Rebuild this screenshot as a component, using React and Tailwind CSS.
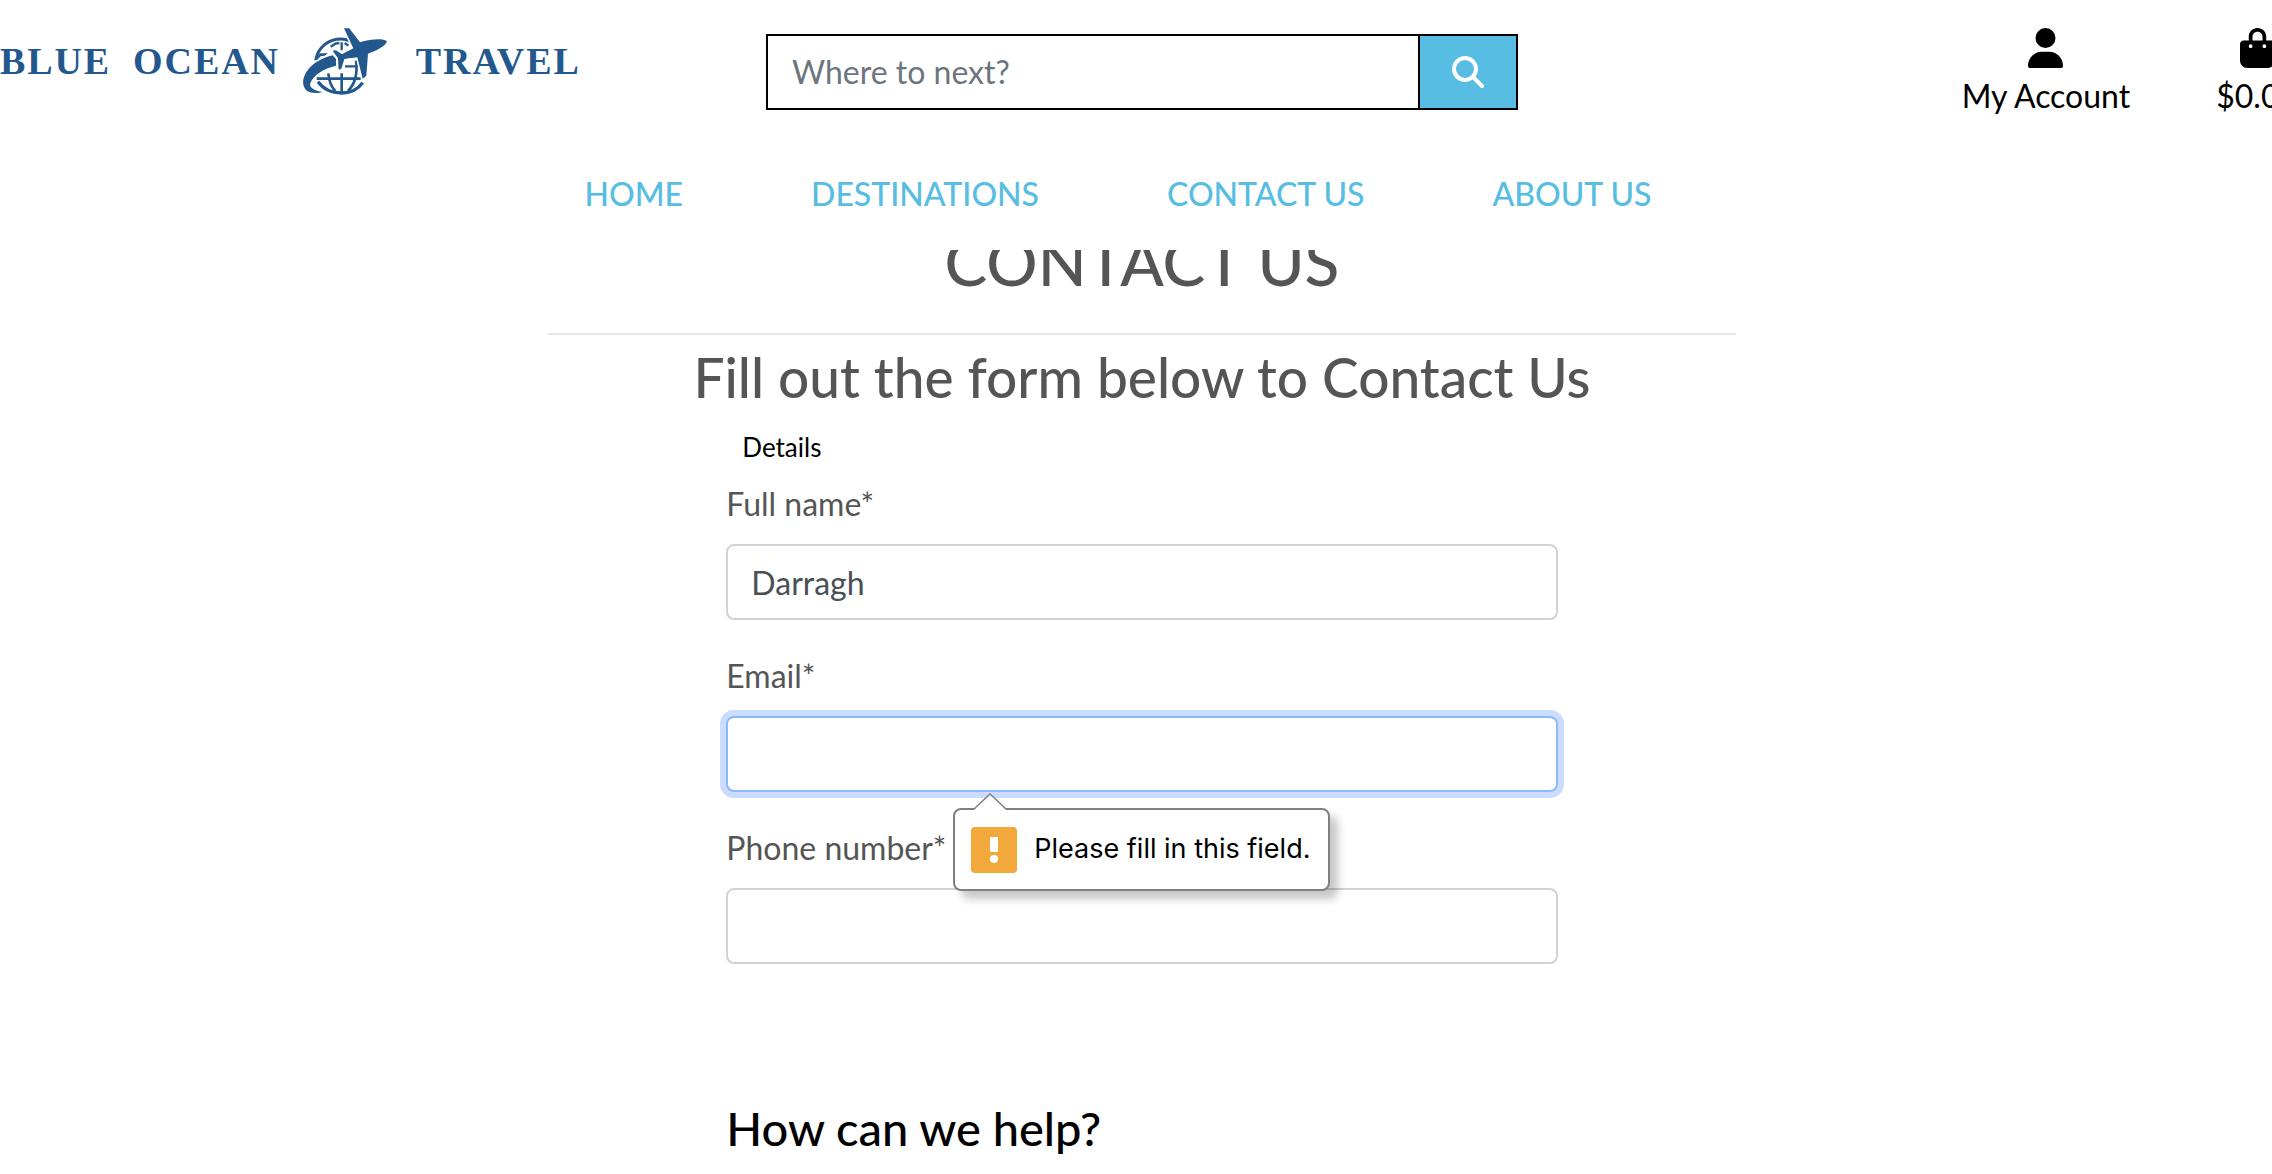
import { FaUser, FaBagShopping, FaMagnifyingGlass } from "react-icons/fa6";

const NAV = ["Home", "Destinations", "Contact us", "About us"];

function GlobeMark() {
  return (
    <svg viewBox="66 38 258 207" className="h-[69px] w-[86px] shrink-0" fill="none" aria-hidden="true">
      <g stroke="#23588f" strokeWidth="8">
        <path d="M107 138C114 98 146 74 184 74C194 74 201 76 208 80" strokeWidth="9" />
        <path d="M114 202C132 228 158 236 185 236C213 236 234 225 248 205" strokeWidth="10" />
        <path d="M110 193H242M185 177V234" />
        <path d="M145 177C147 198 152 216 166 230M228 139C233 176 226 208 204 230" />
        <path d="M195 156H232M185 84V108" strokeWidth="7" />
        <path d="M152 97L166 88L178 86M194 86L205 94" strokeWidth="7" />
      </g>
      <path d="M104 138L120 117L144 117L134 124L122 126L112 136Z" fill="#23588f" />
      <g fill="#23588f" stroke="#fff" strokeWidth="9" style={{ paintOrder: "stroke" }}>
        <path d="M158 123L168 134V154C132 162 100 182 91 206C87 219 100 228 128 233C111 238 88 237 77 226C64 210 68 186 84 166C101 145 128 130 158 123Z" />
        <path d="M192 42H206Q209 42 211 46L240 84C262 77 292 73 310 76Q322 78 320 84C312 98 286 111 264 118L259 184L248 193L232 129C218 131 204 132 193 134L184 163L176 166L174 132L158 109L168 108L186 120C196 114 210 108 220 102Z" />
      </g>
    </svg>
  );
}

function Header() {
  return (
    <header className="relative z-10 h-[250px] bg-white">
      <div className="grid grid-cols-[1fr_752px_1fr] items-start">
        <a href="#home" className="flex items-center pt-[27px] font-['Liberation_Serif',serif] text-[38px] leading-[69px] font-bold tracking-wider text-[#23588f]">
          <span className="mr-[22px]">BLUE</span>
          <span className="mr-[22px]">OCEAN</span>
          <GlobeMark />
          <span className="ml-7">TRAVEL</span>
        </a>
        <form className="mt-[34px] flex h-[76px] border-2 border-black" onSubmit={(e) => e.preventDefault()}>
          <input
            type="text"
            aria-label="Search destinations"
            placeholder="Where to next?"
            className="min-w-0 flex-1 bg-white px-6 text-[32px] text-[#495057] placeholder-[#6c757d] outline-none"
          />
          <button type="submit" aria-label="Search" className="flex w-[98px] items-center justify-center border-l-2 border-black bg-[#57bde2] text-[32px] text-white">
            <FaMagnifyingGlass />
          </button>
        </form>
        <div className="-mr-3.5 flex justify-end gap-[86px] pt-7 text-[32px] leading-[48px] text-black">
          <a href="#account" className="flex flex-col items-center gap-1">
            <FaUser className="h-10 w-[35px]" />
            My Account
          </a>
          <a href="#bag" className="flex flex-col items-center gap-1">
            <FaBagShopping className="h-10 w-[35px]" />
            $0.00
          </a>
        </div>
      </div>
      <nav className="flex justify-center gap-32 pt-[50px] pr-12 text-[32px] leading-[48px] font-medium text-[#57bde2] uppercase">
        {NAV.map((item) => (
          <a key={item} href="#nav">{item}</a>
        ))}
      </nav>
    </header>
  );
}

function Tooltip() {
  return (
    <div role="alert" className="absolute top-[92px] left-[227px] z-20 flex h-[83px] items-center gap-[17px] rounded-lg border-2 border-[#808080] bg-white pr-[18px] pl-4 whitespace-nowrap shadow-[8px_8px_8px_rgba(0,0,0,0.22)]">
      <svg viewBox="0 0 34 18" className="absolute -top-[17px] left-[18px] h-[18px] w-[34px]" aria-hidden="true">
        <path d="M0 18L17 1L34 18Z" fill="#fff" />
        <path d="M1 16L17 1L33 16" fill="none" stroke="#808080" strokeWidth="1.5" />
      </svg>
      <svg viewBox="0 0 46 46" className="h-[46px] w-[46px] rounded-[4px]" aria-hidden="true">
        <rect width="46" height="46" fill="#f2a83b" />
        <path d="M19 10H27V25H19Z" fill="#fff" />
        <circle cx="23" cy="32" r="4" fill="#fff" />
      </svg>
      <span className="font-['Inter',sans-serif] text-[27px] text-black">Please fill in this field.</span>
    </div>
  );
}

function Field({ id, label, type = "text", value = "", focused = false, children }) {
  return (
    <div className="mb-8">
      <label htmlFor={id} className="mb-4 block text-[32px] leading-[48px] text-[#555]">{label}</label>
      <div className="relative">
        <input
          id={id}
          type={type}
          defaultValue={value}
          className={
            "block h-[76px] w-full rounded-lg border-2 bg-white px-[23px] text-[32px] text-[#495057] outline-none " +
            (focused ? "border-[#8bb9fe] ring-[6px] ring-[#ccdcff]" : "border-[#ced4da]")
          }
        />
        {children}
      </div>
    </div>
  );
}

export default function App() {
  return (
    <div className="h-screen overflow-hidden bg-white font-['Lato',sans-serif]">
      <div className="w-[calc(100%+12px)]">
        <Header />
        <main className="mx-auto w-[52%]">
          <h1 className="-mt-7 border-b-2 border-[#e5e5e5] pb-[31px] text-center text-[64px] leading-[80px] font-medium text-[#555] uppercase">
            Contact us
          </h1>
          <h2 className="mt-1.5 text-center text-[55px] leading-[72px] font-medium text-[#555]">Fill out the form below to Contact Us</h2>
          <form className="mx-auto mt-[13px] w-[70%]" noValidate>
            <fieldset>
              <legend className="mb-3 px-4 text-[26px] leading-[42px] text-black">Details</legend>
              <Field id="name" label="Full name*" value="Darragh" />
              <Field id="email" type="email" label="Email*" focused>
                <Tooltip />
              </Field>
              <Field id="phone" type="tel" label="Phone number*" />
            </fieldset>
            <h3 className="mt-24 text-[47px] leading-[72px] font-medium text-black">How can we help?</h3>
          </form>
        </main>
      </div>
    </div>
  );
}
